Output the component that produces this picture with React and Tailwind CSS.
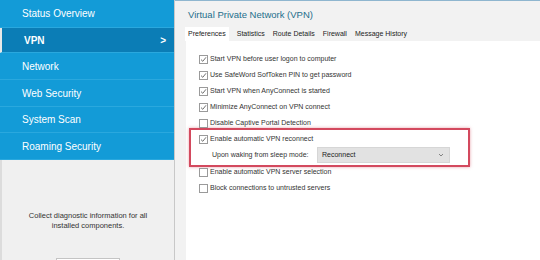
import React from 'react';

const navItems = [
  { label: 'Status Overview', h: 'h-[28px]' },
  { label: 'VPN', h: 'h-[25px]', active: true },
  { label: 'Network', h: 'h-[27px]' },
  { label: 'Web Security', h: 'h-[27px]' },
  { label: 'System Scan', h: 'h-[26px]' },
  { label: 'Roaming Security', h: 'h-[27px]' },
];

const tabs = ['Preferences', 'Statistics', 'Route Details', 'Firewall', 'Message History'];

const Checkbox = ({ checked }) => (
  <span className="w-[9px] h-[9px] border border-[#9a9a9a] bg-white flex items-center justify-center shrink-0">
    {checked && (
      <svg width="7" height="7" viewBox="0 0 7 7">
        <path d="M1 3.6 L2.8 5.3 L6 1.3" fill="none" stroke="#606060" strokeWidth="0.9" />
      </svg>
    )}
  </span>
);

const Row = ({ checked, children }) => (
  <div className="h-[16px] flex items-center gap-[2px] whitespace-nowrap">
    <Checkbox checked={checked} />
    <span>{children}</span>
  </div>
);

const App = () => {
  return (
    <div className="w-[540px] h-[260px] flex overflow-hidden bg-white font-['Liberation_Sans',Arial,sans-serif]">
      {/* sidebar */}
      <div className="w-[175px] shrink-0 flex flex-col border-r border-[#c8c8c8]">
        <div className="bg-[#139bd7]">
          {navItems.map((item) => (
            <div
              key={item.label}
              className={`${item.h} flex items-center justify-between pl-[22px] pr-[8px] text-white text-[10px] border-b border-[#2aa8de] ${
                item.active ? 'bg-[#0b7db6] font-bold border-l-2 border-l-[#e8e8e8] pl-[20px]' : ''
              }`}
            >
              <span>{item.label}</span>
              {item.active && <span className="text-[10px] font-bold">&gt;</span>}
            </div>
          ))}
        </div>
        <div className="flex-1 bg-[#f0f0f0] border-l-2 border-[#dcdcdc] flex flex-col items-center pt-[51px]">
          <p className="text-[7.5px] leading-[10px] text-[#333] text-center">
            Collect diagnostic information for all
            <br />
            installed components.
          </p>
          <div className="mt-[27px] w-[64px] h-[16px] bg-white border border-[#c4c4c4] shrink-0" />
        </div>
      </div>

      {/* main panel */}
      <div className="flex-1 flex flex-col bg-[#f2f2f2] border-t border-[#8fb6cf]">
        <div className="h-[23px] flex items-center pl-[13px] pt-[4px]">
          <h1 className="text-[9.5px] text-[#256f8c] leading-none">Virtual Private Network (VPN)</h1>
        </div>
        <div className="h-[17px] flex items-end pl-[10px] text-[7px] text-[#222]">
          {tabs.map((t, i) => (
            <div
              key={t}
              className={`h-[14px] flex items-center ${i === 0 ? 'bg-white px-[3px] mr-[4px]' : 'px-[4px]'}`}
            >
              {t}
            </div>
          ))}
        </div>
        <div className="flex-1 bg-white ml-[11px] pt-[10px] text-[7px] text-[#333]">
          <div className="pl-[13px]">
            <Row checked>Start VPN before user logon to computer</Row>
            <Row checked>Use SafeWord SofToken PIN to get password</Row>
            <Row checked>Start VPN when AnyConnect is started</Row>
            <Row checked>Minimize AnyConnect on VPN connect</Row>
            <Row>Disable Captive Portal Detection</Row>
          </div>
          <div className="-mt-[3px] ml-[3px] w-[281px] h-[39px] border-2 border-[#d3495e] shadow-[0_0_3px_rgba(211,73,94,0.5)] pl-[8px] pt-[1px] flex flex-col">
            <Row checked>Enable automatic VPN reconnect</Row>
            <div className="h-[16px] flex items-center pl-[13px] whitespace-nowrap">
              <span className="w-[105px]">Upon waking from sleep mode:</span>
              <div className="w-[133px] h-[16px] bg-[#e2e2e2] border border-[#d6d6d6] flex items-center justify-between pl-[4px] pr-[5px]">
                <span className="text-[#222]">Reconnect</span>
                <svg width="6" height="4" viewBox="0 0 6 4">
                  <path d="M1 1 L3 3 L5 1" fill="none" stroke="#777" strokeWidth="0.9" />
                </svg>
              </div>
            </div>
          </div>
          <div className="pl-[13px] -mt-[3px]">
            <Row>Enable automatic VPN server selection</Row>
            <Row>Block connections to untrusted servers</Row>
          </div>
        </div>
      </div>
    </div>
  );
};

export default App;
